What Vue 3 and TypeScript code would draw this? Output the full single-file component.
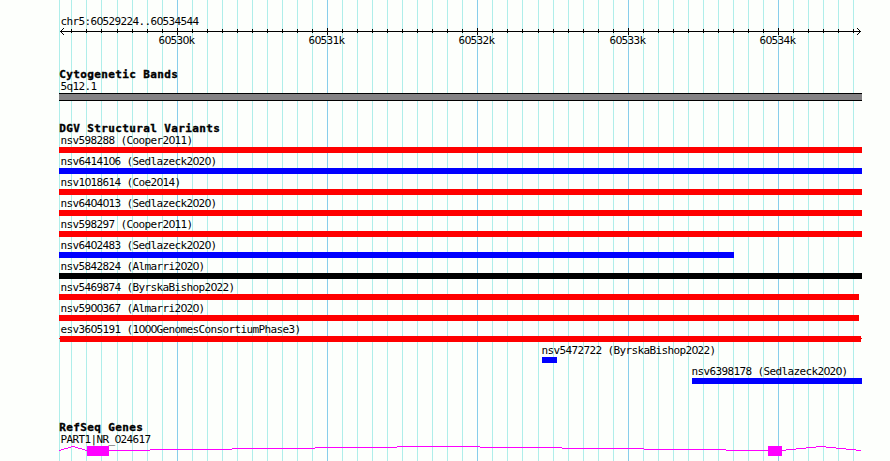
<script setup lang="ts">
interface Variant {
  label: string
  start: number
  end: number
  color: 'red' | 'blue' | 'black'
  textStart?: number
  clipped?: boolean
}

const minor: number[] = [
  59, 71, 86, 101, 117, 132, 147, 162, 192, 207, 222, 237, 252, 267, 282, 297, 312, 342, 357, 372,
  387, 402, 417, 432, 447, 462, 492, 507, 522, 538, 553, 568, 583, 598, 613, 643, 658, 673, 688,
  703, 718, 733, 748, 763, 793, 808, 823, 838, 853,
]
const major: number[] = [177, 327, 477, 628, 778]
const scaleLabels: string[] = ['60530k', '60531k', '60532k', '60533k', '60534k']

const variants: Variant[] = [
  { label: 'nsv598288 (Cooper2011)', start: 59, end: 862, color: 'red' },
  { label: 'nsv6414106 (Sedlazeck2020)', start: 59, end: 862, color: 'blue' },
  { label: 'nsv1018614 (Coe2014)', start: 59, end: 862, color: 'red' },
  { label: 'nsv6404013 (Sedlazeck2020)', start: 59, end: 862, color: 'red' },
  { label: 'nsv598297 (Cooper2011)', start: 59, end: 862, color: 'red' },
  { label: 'nsv6402483 (Sedlazeck2020)', start: 59, end: 734, color: 'blue' },
  { label: 'nsv5842824 (Almarri2020)', start: 59, end: 862, color: 'black' },
  { label: 'nsv5469874 (ByrskaBishop2022)', start: 59, end: 859, color: 'red' },
  { label: 'nsv5900367 (Almarri2020)', start: 59, end: 859, color: 'red' },
  { label: 'esv3605191 (1000GenomesConsortiumPhase3)', start: 60, end: 861, color: 'red', clipped: true },
  { label: 'nsv5472722 (ByrskaBishop2022)', start: 542, end: 557, color: 'blue', textStart: 541.4 },
  { label: 'nsv6398178 (Sedlazeck2020)', start: 692, end: 862, color: 'blue', textStart: 691.4 },
]

// Zeros are set apart so they can be drawn without a dot.
const pieces = (s: string): string[] => s.split(/(0)/).filter((p) => p !== '')

// Stepped intron line: [from, to, y] runs.
const intron: [number, number, number][] = [
  [59, 61, 4], [61, 64, 3], [64, 68, 2], [68, 71, 1], [71, 75, 0], [75, 78, 1], [78, 82, 2],
  [82, 85, 3], [85, 87, 4], [109, 150, 4], [150, 232, 3], [232, 315, 2], [315, 397, 1],
  [397, 480, 0], [480, 562, 1], [562, 644, 2], [644, 726, 3], [726, 768, 4], [782, 786, 4],
  [786, 796, 3], [796, 806, 2], [806, 816, 1], [816, 826, 0], [826, 836, 1], [836, 846, 2],
  [846, 856, 3], [856, 861, 4],
]
</script>

<template>
  <main class="browser">
    <svg class="grid" width="890" height="461" aria-hidden="true">
      <rect v-for="x in minor" :key="x" :x="x" y="0" width="1" height="461" class="minor" />
      <rect v-for="x in major" :key="x" :x="x" y="0" width="1" height="461" class="major" />
    </svg>

    <section class="ruler">
      <div class="label"><span v-for="(p, i) in pieces('chr5:60529224..60534544')" :key="i" :class="{ zero: p === '0' }">{{ p }}</span></div>
      <svg class="strip" width="890" height="7">
        <rect x="60" y="3" width="801" height="1" />
        <rect v-for="x in minor.slice(1)" :key="x" :x="x" y="1" width="1" height="4" />
        <rect v-for="x in major" :key="x" :x="x" y="0" width="1" height="7" />
        <path d="M63 0h1v1h-1zM62 1h1v1h-1zM61 2h1v1h-1zM61 4h1v1h-1zM62 5h1v1h-1zM63 6h1v1h-1z" />
        <path d="M857 0h1v1h-1zM858 1h1v1h-1zM859 2h1v1h-1zM859 4h1v1h-1zM858 5h1v1h-1zM857 6h1v1h-1z" />
      </svg>
      <div class="scale">
        <span v-for="(s, n) in scaleLabels" :key="s" class="mark" :style="{ marginLeft: (n ? major[n] - major[n - 1] - 36 : 158.4) + 'px' }"><span v-for="(p, i) in pieces(s)" :key="i" :class="{ zero: p === '0' }">{{ p }}</span></span>
      </div>
    </section>

    <section class="bands">
      <h2>Cytogenetic Bands</h2>
      <div class="label">5q12.1</div>
      <div class="band"></div>
    </section>

    <section class="variants">
      <h2>DGV Structural Variants</h2>
      <div v-for="v in variants" :key="v.label" class="row">
        <div class="label" :style="{ paddingLeft: (v.textStart ?? 60.4) + 'px' }"><span v-for="(p, i) in pieces(v.label)" :key="i" :class="{ zero: p === '0' }">{{ p }}</span></div>
        <svg class="strip" width="890" height="6">
          <rect :x="v.start" y="0" :width="v.end - v.start" height="6" :class="v.color" />
          <rect v-if="v.clipped" :x="v.start - 1" y="2" :width="v.end - v.start + 2" height="1" :class="v.color" />
        </svg>
      </div>
    </section>

    <section class="genes">
      <h2>RefSeq Genes</h2>
      <div class="label"><span v-for="(p, i) in pieces('PART1|NR_024617')" :key="i" :class="{ zero: p === '0' }">{{ p }}</span></div>
      <svg class="strip gene" width="890" height="10">
        <rect v-for="[a, b, y] in intron" :key="a" :x="a" :y="y" :width="b - a" height="1" />
        <rect x="87" y="0" width="22" height="10" />
        <rect x="768" y="0" width="14" height="10" />
      </svg>
    </section>
  </main>
</template>

<style>
body {
  margin: 0;
  background: #fdfffc;
}
</style>

<style scoped>
.browser {
  position: relative;
  box-sizing: border-box;
  width: 890px;
  height: 461px;
  padding-top: 16px;
  overflow: hidden;
  background: #fdfffc;
  color: #000;
  font-family: "DejaVu Sans Mono", "Liberation Mono", monospace;
  font-size: 11px;
  line-height: 12px;
}
.grid {
  position: absolute;
  top: 0;
  left: 0;
}
.minor { fill: #afeeea; }
.major { fill: #87ceeb; }
section { position: relative; }
.label {
  box-sizing: border-box;
  height: 12px;
  padding-left: 60.4px;
  letter-spacing: -0.622px;
  line-height: 11px;
  white-space: pre;
}
.zero {
  font-family: "DejaVu Sans", sans-serif;
  letter-spacing: -1px;
}
.strip { display: block; }
.scale {
  display: flex;
  height: 12px;
  line-height: 11px;
}
.mark {
  flex: none;
  width: 36px;
  letter-spacing: -0.622px;
  white-space: pre;
}
.mark .zero { letter-spacing: -1px; }
h2 {
  height: 13px;
  margin: 0;
  padding-left: 59.3px;
  font-size: 11px;
  font-weight: bold;
  letter-spacing: 0.378px;
  line-height: 13px;
  white-space: pre;
  -webkit-text-stroke: 0.35px #000;
}
.bands { margin-top: 21px; }
.band {
  box-sizing: border-box;
  width: 803px;
  height: 8px;
  margin-left: 59px;
  border: solid #000;
  border-width: 1px 0;
  background: #848284;
}
.variants { margin-top: 21px; }
.row { height: 21px; }
.red { fill: #f00; }
.blue { fill: #00f; }
.black { fill: #000; }
.genes { margin-top: 34px; }
.gene { fill: #f0f; }
.gene rect { shape-rendering: crispEdges; }
</style>
